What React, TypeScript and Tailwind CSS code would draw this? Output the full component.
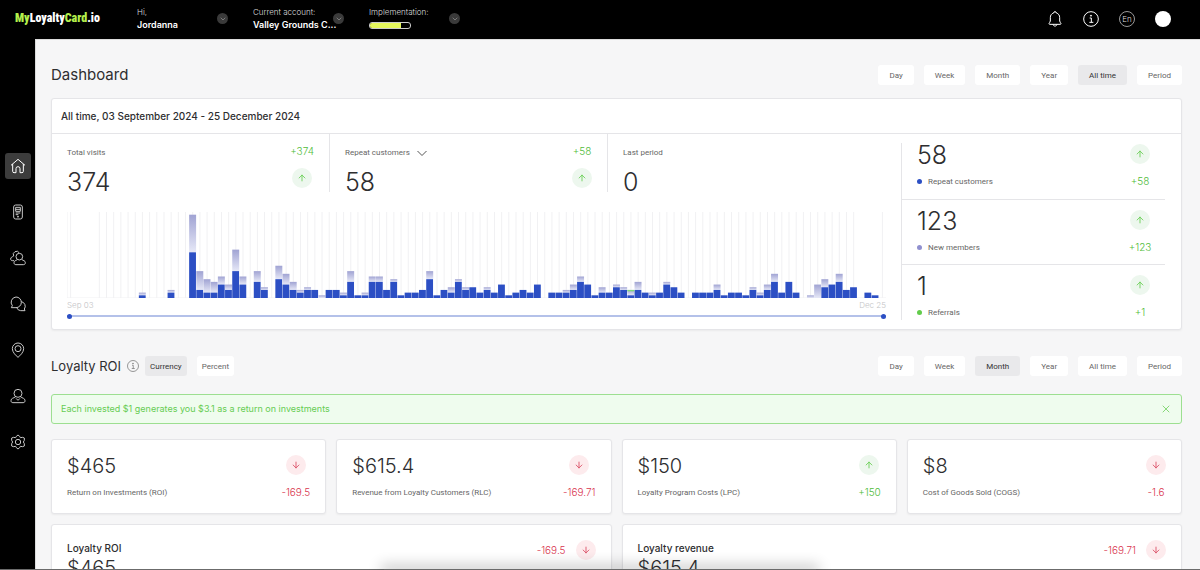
import React, { useState } from "react";
import clsx from "clsx";
import { ArrowDown, ArrowUp, ChevronDown, X } from "lucide-react";

const periods = ["Day", "Week", "Month", "Year", "All time", "Period"];

// [day index, total visits, repeat customers]
const visits = [
  [10, 2, 1], [14, 3, 2], [17, 31, 17], [18, 10, 3], [19, 7, 2], [20, 6, 2], [21, 8, 5], [22, 5, 3],
  [23, 18, 10], [24, 8, 5], [26, 10, 6], [27, 4, 3], [29, 12, 7], [30, 9, 5], [31, 6, 3], [32, 3, 2],
  [33, 4, 3], [34, 3, 3], [35, 1, 0], [36, 3, 3], [37, 3, 3], [38, 2, 1], [39, 10, 6], [40, 1, 1],
  [41, 2, 1], [42, 8, 6], [43, 8, 6], [44, 3, 3], [45, 7, 6], [46, 1, 1], [47, 2, 2], [48, 2, 2],
  [49, 3, 3], [50, 10, 7], [51, 1, 1], [52, 3, 3], [53, 4, 2], [54, 7, 6], [55, 4, 3], [56, 4, 4],
  [57, 2, 2], [58, 4, 3], [59, 2, 2], [60, 5, 5], [61, 1, 1], [62, 2, 2], [63, 3, 3], [64, 2, 2],
  [65, 5, 5], [67, 2, 2], [68, 2, 2], [69, 3, 2], [70, 5, 3], [71, 8, 6], [72, 5, 5], [73, 1, 1],
  [74, 4, 2], [75, 2, 2], [76, 5, 4], [77, 4, 3], [78, 3, 1], [79, 6, 3], [80, 2, 2], [81, 2, 1],
  [82, 2, 2], [83, 6, 5], [84, 4, 4], [85, 2, 2], [87, 2, 2], [88, 2, 2], [89, 2, 2], [90, 5, 3],
  [91, 1, 1], [92, 2, 2], [93, 2, 2], [94, 1, 1], [95, 4, 3], [96, 2, 1], [97, 5, 3], [98, 9, 6],
  [99, 2, 2], [100, 6, 6], [101, 2, 2], [103, 1, 0], [104, 5, 0], [105, 7, 4], [106, 5, 5],
  [107, 9, 6], [108, 3, 3], [109, 4, 4], [111, 2, 2], [112, 1, 1],
];

const DAYS = 114;
const MAX = 32;
const gridDays = [0, ...Array.from({ length: 106 }, (_, i) => i + 4), 113];

const roiCards = [
  { value: "$465", label: "Return on Investments (ROI)", change: "-169.5" },
  { value: "$615.4", label: "Revenue from Loyalty Customers (RLC)", change: "-169.71" },
  { value: "$150", label: "Loyalty Program Costs (LPC)", change: "+150" },
  { value: "$8", label: "Cost of Goods Sold (COGS)", change: "-1.6" },
];

const legend = [
  { value: "58", label: "Repeat customers", change: "+58", dot: "bg-[#2c4fc4]", box: "h-[57px] border-b" },
  { value: "123", label: "New members", change: "+123", dot: "bg-[#9090cf]", box: "h-[65px] border-b pt-[9px]" },
  { value: "1", label: "Referrals", change: "+1", dot: "bg-[#62cc4b]", box: "h-[55px] pt-[9px]" },
];

const navItems = [
  {
    name: "Home",
    icon: <path d="M1.500 11 12 2l10.500 9M4 9v11a2 2 0 0 0 2 2h3v-6a3 3 0 0 1 6 0v6h3a2 2 0 0 0 2-2V9" />,
  },
  {
    name: "Terminal",
    icon: (
      <>
        <rect x="5.500" y="1.500" width="13" height="21" rx="3" />
        <rect x="8.500" y="5" width="7" height="6" />
        <path d="M8.500 8h7M8.500 13.500h7M8.500 16h4" />
        <circle cx="12" cy="19" r="0.8" fill="currentColor" />
      </>
    ),
  },
  {
    name: "Customers",
    icon: (
      <>
        <circle cx="14" cy="10" r="5" />
        <path d="M11 14.500c-2 1.500-5 1.500-5 4.500 0 2 1 3 3 3h11c2 0 3-1 3-3 0-3-3-3-5-4.500" />
        <path d="M14 4.500A4.500 4.500 0 1 0 5.500 9C3 10.500 1 11 1 13.500c0 1.500 1 2.500 2.500 2.500H6" />
      </>
    ),
  },
  {
    name: "Messages",
    icon: (
      <>
        <path d="M9 1.500a8 8 0 0 1 0 16H2l1.500-3A8 8 0 0 1 9 1.500z" />
        <path d="M17 8.500a7 7 0 0 1 4.500 11L22.500 22H16a7 7 0 0 1-6-4.500" />
      </>
    ),
  },
  {
    name: "Locations",
    icon: (
      <>
        <path d="M20.500 10c0 5.500-5.500 10.500-8.500 13-3-2.500-8.500-7.500-8.500-13a8.500 8.500 0 0 1 17 0z" />
        <circle cx="12" cy="10" r="4.500" />
      </>
    ),
  },
  {
    name: "Staff",
    icon: (
      <>
        <circle cx="12" cy="8" r="6" />
        <path d="M8.500 13c-3 2.500-7 2-7 6 0 2 1 3 3 3h15c2 0 3-1 3-3 0-4-4-3.500-7-6" />
        <path d="m9 15.500 3 3 3-3" />
      </>
    ),
  },
  {
    name: "Settings",
    icon: (
      <>
        <path d="M9.500 3.500 12 1.500l2.500 2 1 2 3.500-.5 2.500 1 0 3.500L20 12l1.500 2.500 0 3.500-2.500 1-3.500-.5-1 2-2.500 2-2.500-2-1-2L5 19l-2.500-1 0-3.500L4 12 2.500 9.500l0-3.500L5 5l3.500.5z" />
        <circle cx="12" cy="12" r="4" />
      </>
    ),
  },
];

function InfoIcon({ className }: { className: string }) {
  return (
    <svg viewBox="0 0 24 24" fill="none" stroke="currentColor" strokeWidth="1.5" className={className}>
      <circle cx="12" cy="12" r="11" />
      <path d="M12.500 17v-6.500h-2.500M9.500 17h6" />
      <circle cx="12" cy="7" r="0.8" fill="currentColor" />
    </svg>
  );
}

function Trend({ change }: { change: string }) {
  const down = change.startsWith("-");
  const Icon = down ? ArrowDown : ArrowUp;
  return (
    <span
      className={clsx(
        "flex h-5 w-5 shrink-0 items-center justify-center rounded-full",
        down ? "bg-[#fdebed] text-[#d9475f]" : "bg-[#edf7ee] text-[#62cc4b]"
      )}
    >
      <Icon className="h-2.5 w-2.5" strokeWidth={2} />
    </span>
  );
}

function Change({ change }: { change: string }) {
  return (
    <span
      className={clsx("text-[10px] leading-3 font-light", change.startsWith("-") ? "text-[#d9364f]" : "text-[#4fbc39]")}
    >
      {change}
    </span>
  );
}

function Label({ children }: { children: React.ReactNode }) {
  return (
    <span className="pt-px font-['Roboto',sans-serif] text-[8px] leading-4 whitespace-nowrap text-[#666]">
      {children}
    </span>
  );
}

function Toggle({ name, active, wide, onClick }: { name: string; active: boolean; wide?: boolean; onClick: () => void }) {
  return (
    <button
      onClick={onClick}
      className={clsx(
        "h-5 rounded-[3px] pt-px font-['Roboto',sans-serif] text-[8px]",
        wide ? "px-[11px]" : "px-[5px]",
        active ? "bg-[#e9e9eb] text-[#333]" : "bg-white text-[#666]"
      )}
    >
      {name}
    </button>
  );
}

function PeriodTabs({ initial }: { initial: string }) {
  const [active, setActive] = useState(initial);
  return (
    <div className="flex gap-2.5">
      {periods.map((period) => (
        <Toggle key={period} name={period} wide active={period === active} onClick={() => setActive(period)} />
      ))}
    </div>
  );
}

function HeaderItem({ label, children }: { label: string; children: React.ReactNode }) {
  return (
    <div className="flex w-[91px] items-center justify-between">
      <div className="flex w-20 flex-col gap-px">
        <span className="text-[8px] leading-3 font-light text-[#ddd]">{label}</span>
        <div className="flex h-3 items-center text-[9px] leading-3 font-semibold whitespace-nowrap">{children}</div>
      </div>
      <button
        aria-label={`${label} menu`}
        className="flex h-[11px] w-[11px] shrink-0 items-center justify-center rounded-full bg-[#3a3a3a] text-[#bbb]"
      >
        <ChevronDown className="h-2 w-2" strokeWidth={1.5} />
      </button>
    </div>
  );
}

function Header() {
  return (
    <header className="flex h-[39px] shrink-0 items-center bg-black pr-[29px] pb-0.5 pl-[15px] text-white">
      <a
        href="#"
        className="w-[122px] pb-0.5 font-['Roboto_Condensed','Roboto',sans-serif] text-[12px] font-black whitespace-nowrap"
      >
        <span className="text-[#b4f04c]">My</span>Loyalty<span className="text-[#b4f04c]">Card</span>.io
      </a>
      <div className="flex gap-[25px]">
        <HeaderItem label="Hi,">Jordanna</HeaderItem>
        <HeaderItem label="Current account:">Valley Grounds C...</HeaderItem>
        <HeaderItem label="Implementation:">
          <div className="h-[7px] w-[42px] overflow-hidden rounded-[3px] border border-[#ccc]">
            <div className="h-full w-[78%] bg-[#e4f75c]" />
          </div>
        </HeaderItem>
      </div>
      <div className="ml-auto flex items-center gap-5">
        <button aria-label="Notifications">
          <svg viewBox="0 0 24 24" fill="none" stroke="currentColor" strokeWidth="1.500" className="h-4 w-4">
            <path d="M10 3a2 2 0 0 1 4 0c3.500 1 5 3.500 5 7v5c0 2 2 2.500 2 4 0 .6-.4 1-1 1H4c-.6 0-1-.4-1-1 0-1.500 2-2 2-4v-5c0-3.500 1.500-6 5-7zM9 20c.5 3.500 5.500 3.500 6 0" />
          </svg>
        </button>
        <button aria-label="Help">
          <InfoIcon className="h-4 w-4" />
        </button>
        <button className="flex h-4 w-4 items-center justify-center rounded-full border border-[#999] text-[8px] font-light text-[#ddd]">
          En
        </button>
        <button aria-label="Profile" className="h-4 w-4 rounded-full bg-white" />
      </div>
    </header>
  );
}

function Sidebar() {
  return (
    <nav className="flex w-[35px] shrink-0 flex-col items-center gap-5 bg-black pt-[114px]">
      {navItems.map((item, index) => (
        <a
          key={item.name}
          href="#"
          aria-label={item.name}
          className={clsx(
            "flex h-[26px] w-[26px] items-center justify-center rounded-[3px]",
            index === 0 ? "bg-[#3c3c3c] text-white" : "text-[#c8c8c8]"
          )}
        >
          <svg viewBox="0 0 24 24" fill="none" stroke="currentColor" strokeWidth="1.500" strokeLinejoin="round" className="h-4 w-4">
            {item.icon}
          </svg>
        </a>
      ))}
    </nav>
  );
}

function VisitsChart() {
  return (
    <svg viewBox={`0 0 ${DAYS} ${MAX}`} preserveAspectRatio="none" className="block h-[86px] w-full">
      <defs>
        <linearGradient id="newMembers" x1="0" y1="0" x2="0" y2="1">
          <stop offset="0" stopColor="#a0a3d3" />
          <stop offset="1" stopColor="#e6e8f7" />
        </linearGradient>
      </defs>
      <g stroke="#f1f1f3" strokeWidth="1">
        <line x1="0" x2="0" y1="0" y2={MAX} vectorEffect="non-scaling-stroke" />
        <line x1="0" x2={DAYS} y1={MAX} y2={MAX} vectorEffect="non-scaling-stroke" />
        {gridDays.map((day) => (
          <line key={day} x1={day + 0.5} x2={day + 0.5} y1="0" y2={MAX} vectorEffect="non-scaling-stroke" />
        ))}
      </g>
      {visits.map(([day, total, repeat]) => (
        <g key={day}>
          {total > repeat && <rect x={day} y={MAX - total} width="0.97" height={total - repeat} fill="url(#newMembers)" />}
          <rect x={day} y={MAX - repeat} width="0.95" height={repeat} fill="#2c4fc4" />
        </g>
      ))}
      {/* single referral */}
      <rect x="78" y={MAX - 3} width="0.97" height="0.5" fill="#7edb7a" />
    </svg>
  );
}

const thumb =
  "pointer-events-none absolute inset-0 h-1.5 w-full appearance-none bg-transparent [&::-webkit-slider-thumb]:pointer-events-auto [&::-webkit-slider-thumb]:h-[5px] [&::-webkit-slider-thumb]:w-[5px] [&::-webkit-slider-thumb]:appearance-none [&::-webkit-slider-thumb]:rounded-full [&::-webkit-slider-thumb]:bg-[#2c4fc4]";

function RangeSlider() {
  return (
    <div className="relative flex h-1.5 items-center">
      <div className="h-0.5 w-full bg-[#b4c1e9]" />
      <input type="range" aria-label="Start date" min={0} max={DAYS} defaultValue={0} className={thumb} />
      <input type="range" aria-label="End date" min={0} max={DAYS} defaultValue={DAYS} className={thumb} />
    </div>
  );
}

function StatTrend({ change }: { change: string }) {
  return (
    <div className="flex flex-col items-center gap-[11px] pt-px">
      <Change change={change} />
      <Trend change={change} />
    </div>
  );
}

function Overview() {
  return (
    <section className="mt-[13px] rounded-[3px] border border-[#e5e5e8] bg-white shadow-xs">
      <h2 className="border-b border-[#e5e5e8] px-[9px] py-[9px] text-[10px] leading-4 font-medium">
        All time, 03 September 2024 - 25 December 2024
      </h2>
      <div className="flex pr-4">
        <div className="min-w-0 flex-1 pr-[15px]">
          <div className="grid grid-cols-3">
            <div className="flex h-[58px] justify-between border-r border-[#e5e5e8] px-[15px] pt-2.5">
              <div className="flex flex-col">
                <Label>Total visits</Label>
                <p className="mt-[5px] text-[25px] leading-8 font-light">374</p>
              </div>
              <StatTrend change="+374" />
            </div>
            <div className="flex h-[58px] justify-between border-r border-[#e5e5e8] px-[15px] pt-2.5">
              <div className="flex flex-col">
                <button className="flex h-[17px] items-center gap-1.5">
                  <Label>Repeat customers</Label>
                  <svg viewBox="0 0 12 12" fill="none" stroke="#555" className="h-3 w-3">
                    <path d="m1.500 4 4.500 4.500L10.500 4" />
                  </svg>
                </button>
                <p className="mt-[5px] text-[25px] leading-8 font-light">58</p>
              </div>
              <StatTrend change="+58" />
            </div>
            <div className="flex h-[58px] flex-col px-[15px] pt-2.5">
              <Label>Last period</Label>
              <p className="mt-[5px] text-[25px] leading-8 font-light">0</p>
            </div>
          </div>
          <div className="mt-5 pl-[15px]">
            <VisitsChart />
            <div className="flex justify-between py-px text-[8px] leading-3 font-light text-[#c4c4c6]">
              <span>Sep 03</span>
              <span>Dec 25</span>
            </div>
            <div className="mt-px">
              <RangeSlider />
            </div>
          </div>
        </div>
        <div className="my-[9px] w-[264px] shrink-0 border-l border-[#e5e5e8]">
          {legend.map((item) => (
            <div key={item.label} className={clsx("flex justify-between border-[#e5e5e8] px-[15px]", item.box)}>
              <div>
                <p className="text-[25px] leading-6 font-light">{item.value}</p>
                <p className="mt-1.5 flex items-center gap-1.5">
                  <span className={clsx("h-[5px] w-[5px] rounded-full", item.dot)} />
                  <Label>{item.label}</Label>
                </p>
              </div>
              <div className="flex w-5 flex-col items-center gap-[11px] pt-px">
                <Trend change={item.change} />
                <Change change={item.change} />
              </div>
            </div>
          ))}
        </div>
      </div>
    </section>
  );
}

function LoyaltyRoi() {
  const [unit, setUnit] = useState("Currency");
  const [alertOpen, setAlertOpen] = useState(true);

  return (
    <section className="mt-[26px]">
      <div className="flex items-center justify-between">
        <div className="flex items-center">
          <h2 className="text-[13px] leading-5">Loyalty ROI</h2>
          <InfoIcon className="ml-1.5 h-3 w-3 text-[#777]" />
          <div className="ml-1.5 flex gap-2.5">
            {["Currency", "Percent"].map((item) => (
              <Toggle key={item} name={item} active={item === unit} onClick={() => setUnit(item)} />
            ))}
          </div>
        </div>
        <PeriodTabs initial="Month" />
      </div>

      {alertOpen && (
        <div className="mt-[18px] flex h-[30px] items-center justify-between rounded-[3px] border border-[#9ddf91] bg-[#effcee] px-[9px] text-[#66cc52]">
          <p className="text-[9px]">Each invested $1 generates you $3.1 as a return on investments</p>
          <button aria-label="Close" onClick={() => setAlertOpen(false)}>
            <X className="h-3 w-3" strokeWidth={1.5} />
          </button>
        </div>
      )}

      <div className="mt-[15px] grid grid-cols-4 gap-2.5">
        {roiCards.map((card) => (
          <div
            key={card.label}
            className="flex justify-between rounded-[3px] border border-[#e5e5e8] bg-white px-[15px] pt-[14px] pb-3 shadow-xs"
          >
            <div className="flex flex-col">
              <p className="text-[20px] leading-6 font-light">{card.value}</p>
              <div className="mt-1.5 flex">
                <Label>{card.label}</Label>
              </div>
            </div>
            <div className="flex min-w-5 flex-col items-center gap-[11px] pt-px">
              <Trend change={card.change} />
              <Change change={card.change} />
            </div>
          </div>
        ))}
      </div>

      <div className="mt-2.5 grid grid-cols-2 gap-2.5">
        {[
          { title: "Loyalty ROI", value: "$465", change: "-169.5" },
          { title: "Loyalty revenue", value: "$615.4", change: "-169.71" },
        ].map((card) => (
          <div key={card.title} className="flex h-40 justify-between rounded-[3px] border border-[#e5e5e8] bg-white px-[15px] pt-[15px] shadow-xs">
            <div>
              <h3 className="text-[10px] leading-4 font-medium">{card.title}</h3>
              <p className="text-[20px] leading-6 font-light">{card.value}</p>
            </div>
            <div className="flex h-5 items-center gap-2.5">
              <Change change={card.change} />
              <Trend change={card.change} />
            </div>
          </div>
        ))}
      </div>
    </section>
  );
}

export default function App() {
  return (
    <div className="relative flex h-screen flex-col overflow-hidden bg-[#f6f6f7] font-['Inter',sans-serif] text-[#2e2e30]">
      <Header />
      <div className="flex min-h-0 flex-1">
        <Sidebar />
        <main className="min-w-0 flex-1 overflow-hidden border-t border-l border-[#dcdcdc] pt-[25px] pr-[18px] pl-[15px]">
          <div className="flex items-center justify-between">
            <h1 className="text-[15px] leading-5">Dashboard</h1>
            <PeriodTabs initial="All time" />
          </div>
          <Overview />
          <LoyaltyRoi />
        </main>
      </div>
      {/* Bottom edge of the window */}
      <div className="pointer-events-none absolute inset-x-0 bottom-0 flex h-px justify-center bg-[#6b6b6b]">
        <div className="h-px w-[36%] shadow-[0_0_14px_3px_rgba(0,0,0,0.3)]" />
      </div>
    </div>
  );
}
